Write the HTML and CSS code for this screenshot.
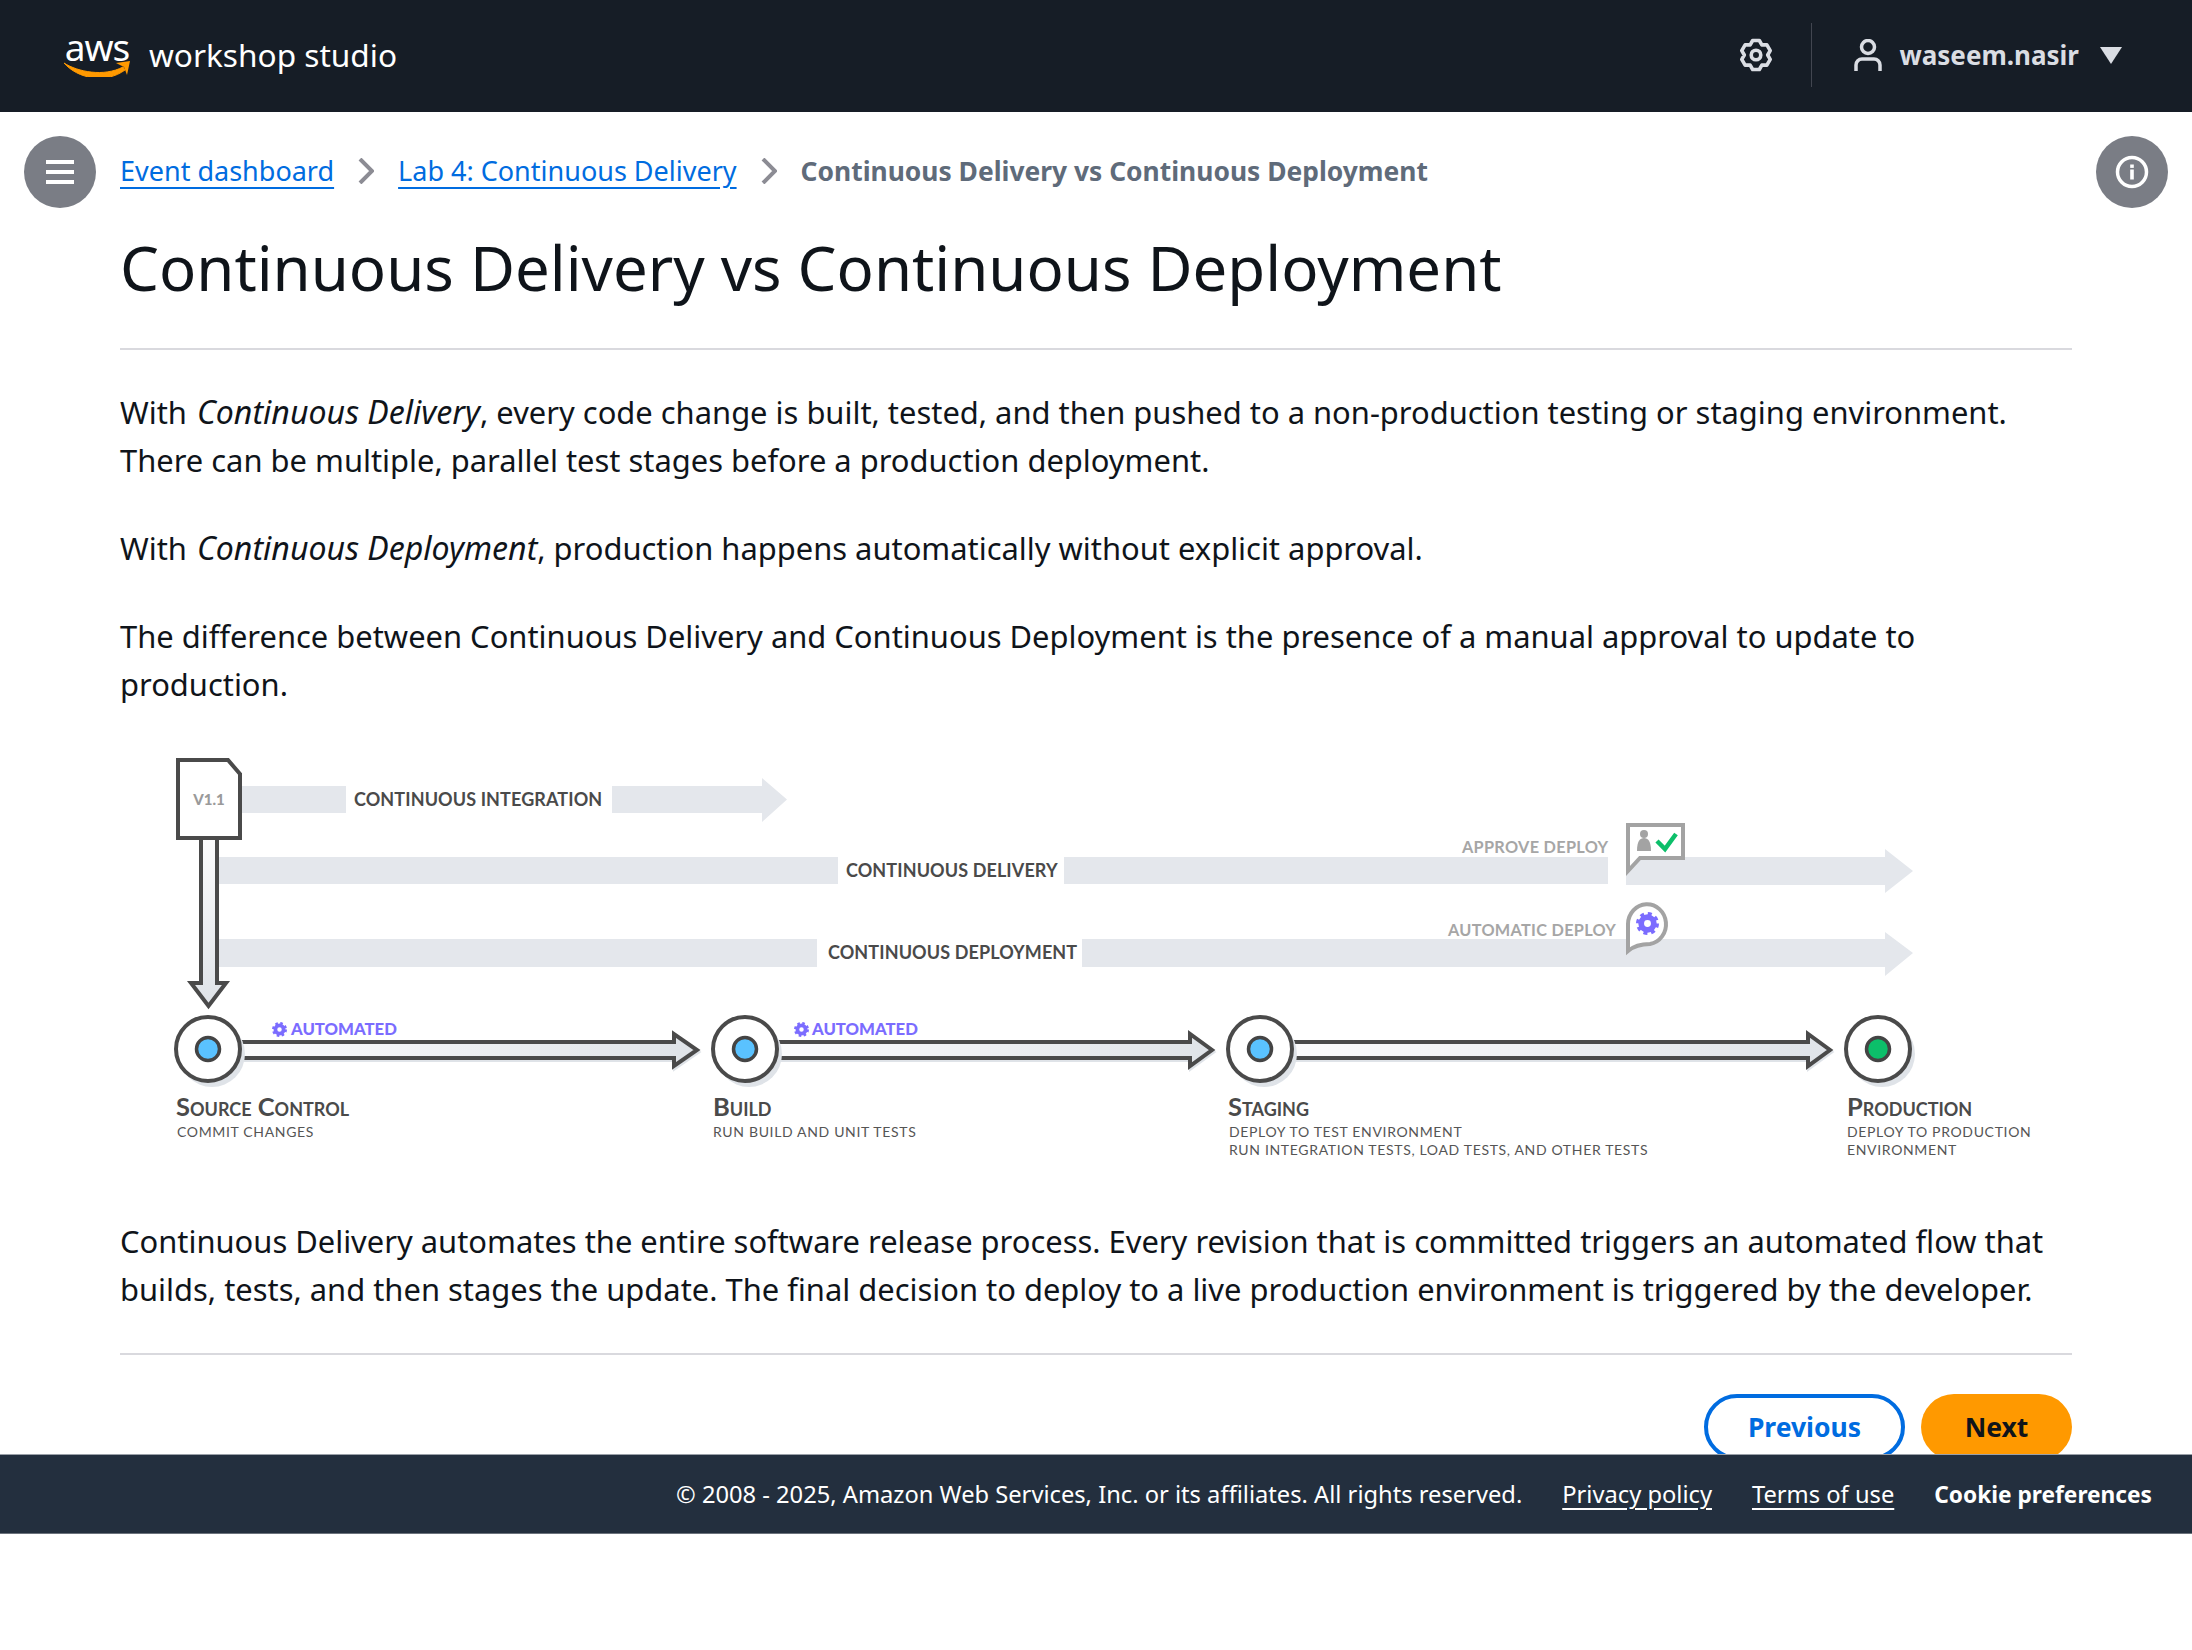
FILE: index.html
```html
<!DOCTYPE html>
<html lang="en">
<head>
  <meta charset="UTF-8" />
  <title>Continuous Delivery vs Continuous Deployment</title>
  <link rel="stylesheet" href="styles.css">
</head>
<body>
  <header class="topbar">
    <a class="brand">
      <span class="logo">
        <span class="logo-text">aws</span>
        <svg class="logo-smile" viewBox="0 0 66 16" width="66" height="16">
          <path d="M0 2 C14 11 40 16 59 6 L61 9 C42 23 14 18 0 2 Z" fill="#ff9900" stroke="#ff9900" stroke-width="1"/>
          <path d="M52 2 L66 0 L63 14 L60 6 Z" fill="#ff9900"/>
        </svg>
      </span>
      <span class="brand-name">workshop studio</span>
    </a>
    <svg class="gear" viewBox="0 0 32 32" width="34" height="34">
      <polygon points="12.85,2.36 19.15,2.36 21.5,6.47 26.24,6.45 29.39,11.91 27,16 29.39,20.09 26.24,25.55 21.5,25.53 19.15,29.64 12.85,29.64 10.5,25.53 5.76,25.55 2.61,20.09 5,16 2.61,11.91 5.76,6.45 10.5,6.47" fill="none" stroke="#dadde3" stroke-width="3.4" stroke-linejoin="round"/>
      <circle cx="16" cy="16" r="4.5" fill="none" stroke="#dadde3" stroke-width="3.4"/>
    </svg>
    <div class="divider"></div>
    <div class="user">
      <svg viewBox="0 0 28 32" width="28" height="32">
        <circle cx="14" cy="8" r="6.5" fill="none" stroke="#dadde3" stroke-width="3.5"/>
        <path d="M2 32 V26 A6 6 0 0 1 8 20 H20 A6 6 0 0 1 26 26 V32" fill="none" stroke="#dadde3" stroke-width="3.5"/>
      </svg>
      <span class="user-name">waseem.nasir</span>
      <span class="caret"></span>
    </div>
  </header>

  <main class="page-main">
    <div class="crumb-row">
      <button class="round-btn" aria-label="Menu">
        <span class="bars"><i></i><i></i><i></i></span>
      </button>
      <nav class="crumbs">
        <a href="#">Event dashboard</a>
        <svg class="chev" viewBox="0 0 16 26" width="16" height="26"><path d="M2 1 L14 13 L2 25" fill="none" stroke="#8c8c94" stroke-width="4"/></svg>
        <a href="#">Lab 4: Continuous Delivery</a>
        <svg class="chev" viewBox="0 0 16 26" width="16" height="26"><path d="M2 1 L14 13 L2 25" fill="none" stroke="#8c8c94" stroke-width="4"/></svg>
        <span class="crumb-current">Continuous Delivery vs Continuous Deployment</span>
      </nav>
      <button class="round-btn" aria-label="Info">
        <svg viewBox="0 0 36 36" width="36" height="36">
          <circle cx="18" cy="18" r="14.5" fill="none" stroke="#fff" stroke-width="3.5"/>
          <rect x="16.2" y="15.5" width="3.6" height="10" fill="#fff"/>
          <rect x="16.2" y="10.5" width="3.6" height="3.4" fill="#fff"/>
        </svg>
      </button>
    </div>

    <article class="content">
      <h1>Continuous Delivery vs Continuous Deployment</h1>

      <p>With <em>Continuous Delivery</em>, every code change is built, tested, and then pushed to a non-production testing or staging environment. There can be multiple, parallel test stages before a production deployment.</p>
      <p>With <em>Continuous Deployment</em>, production happens automatically without explicit approval.</p>
      <p>The difference between Continuous Delivery and Continuous Deployment is the presence of a manual approval to update to production.</p>

      <svg class="diagram" viewBox="120 748 1952 429" width="1952" height="429">
        <defs>
          <linearGradient id="fade-h" x1="0" x2="1" y1="0" y2="0">
            <stop offset="0" stop-color="#fbfbfc"/>
            <stop offset="1" stop-color="#dfe3e8"/>
          </linearGradient>
          <linearGradient id="fade-v" x1="0" x2="0" y1="0" y2="1">
            <stop offset="0" stop-color="#fbfbfc"/>
            <stop offset="1" stop-color="#dfe3e8"/>
          </linearGradient>
          <symbol id="cog" viewBox="0 0 20 20" overflow="visible">
            <circle cx="10" cy="10" r="8.5" fill="none" stroke="currentColor" stroke-width="3" stroke-dasharray="3.4 3.28"/>
            <circle cx="10" cy="10" r="5.5" fill="none" stroke="currentColor" stroke-width="5"/>
          </symbol>
        </defs>

        <!-- pipeline bands -->
        <g class="band">
          <rect x="240" y="786" width="106" height="27"/>
          <polygon points="612,786 762,786 762,778 787,799.5 762,822 762,813 612,813"/>
          <rect x="217" y="857" width="621" height="27"/>
          <rect x="1064" y="857" width="544" height="27"/>
          <polygon points="1626,857 1885,857 1885,849 1913,871 1885,893 1885,885 1626,885"/>
          <rect x="217" y="939" width="600" height="28"/>
          <polygon points="1082,939 1885,939 1885,932 1913,953 1885,976 1885,967 1082,967"/>
        </g>
        <text class="band-label" x="354" y="806">CONTINUOUS INTEGRATION</text>
        <text class="band-label" x="846" y="877">CONTINUOUS DELIVERY</text>
        <text class="band-label" x="828" y="959">CONTINUOUS DEPLOYMENT</text>

        <!-- version file and arrow down -->
        <polygon class="pipe-v" points="201,838 217,838 217,983 226,983 208.500,1006 191,983 201,983"/>
        <path class="file" d="M178 760 H228 L240 774 V838 H178 Z"/>
        <text class="file-label" x="209" y="805">V1.1</text>

        <!-- stage arrows -->
        <polygon class="pipe-h" points="241,1042 674,1042 674,1034 697,1050 674,1066 674,1058 241,1058"/>
        <polygon class="pipe-h" points="777,1042 1190,1042 1190,1034 1212,1050 1190,1066 1190,1058 777,1058"/>
        <polygon class="pipe-h" points="1293,1042 1808,1042 1808,1034 1830,1050 1808,1066 1808,1058 1293,1058"/>

        <!-- stage nodes -->
        <g class="node"><circle class="node-shadow" cx="212" cy="1054" r="33"/><circle class="node-ring" cx="208" cy="1049" r="32"/><circle class="dot-blue" cx="208" cy="1049" r="11.500"/></g>
        <g class="node"><circle class="node-shadow" cx="749" cy="1054" r="33"/><circle class="node-ring" cx="745" cy="1049" r="32"/><circle class="dot-blue" cx="745" cy="1049" r="11.500"/></g>
        <g class="node"><circle class="node-shadow" cx="1264" cy="1054" r="33"/><circle class="node-ring" cx="1260" cy="1049" r="32"/><circle class="dot-blue" cx="1260" cy="1049" r="11.500"/></g>
        <g class="node"><circle class="node-shadow" cx="1882" cy="1054" r="33"/><circle class="node-ring" cx="1878" cy="1049" r="32"/><circle class="dot-green" cx="1878" cy="1049" r="11.500"/></g>

        <!-- automated tags -->
        <use class="purple" href="#cog" x="272" y="1022" width="15" height="15"/>
        <text class="auto-label" x="291" y="1035">AUTOMATED</text>
        <use class="purple" href="#cog" x="794" y="1022" width="15" height="15"/>
        <text class="auto-label" x="812" y="1035">AUTOMATED</text>

        <!-- stage titles -->
        <text class="stage-title" x="176" y="1116">Source Control</text>
        <text class="stage-sub" x="177" y="1137">COMMIT CHANGES</text>
        <text class="stage-title" x="713" y="1116">Build</text>
        <text class="stage-sub" x="713" y="1137">RUN BUILD AND UNIT TESTS</text>
        <text class="stage-title" x="1228" y="1116">Staging</text>
        <text class="stage-sub" x="1229" y="1137">DEPLOY TO TEST ENVIRONMENT</text>
        <text class="stage-sub" x="1229" y="1155">RUN INTEGRATION TESTS, LOAD TESTS, AND OTHER TESTS</text>
        <text class="stage-title" x="1847" y="1116">Production</text>
        <text class="stage-sub" x="1847" y="1137">DEPLOY TO PRODUCTION</text>
        <text class="stage-sub" x="1847" y="1155">ENVIRONMENT</text>

        <!-- approve bubble -->
        <text class="deploy-label" x="1462" y="853">APPROVE DEPLOY</text>
        <path class="bubble" d="M1628 825 H1683 V858 H1640 L1628 871 Z"/>
        <circle class="person" cx="1644" cy="834" r="4"/>
        <path class="person" d="M1637 851 C1637 841 1640 838 1644 838 C1648 838 1651 841 1651 851 Z"/>
        <path class="check" d="M1657 841 L1665 849 L1676 834" />

        <!-- automatic bubble -->
        <text class="deploy-label" x="1448" y="936">AUTOMATIC DEPLOY</text>
        <path class="bubble" d="M1628 951 V924 A19 20 0 1 1 1650 944 C1642 944 1635 945 1628 951 Z"/>
        <use class="purple" href="#cog" x="1636" y="912" width="23" height="23"/>
      </svg>

      <p>Continuous Delivery automates the entire software release process. Every revision that is committed triggers an automated flow that builds, tests, and then stages the update. The final decision to deploy to a live production environment is triggered by the developer.</p>

      <div class="pager">
        <button class="btn btn-outline">Previous</button>
        <button class="btn btn-primary">Next</button>
      </div>
    </article>
  </main>

  <footer class="footer">
    <span>© 2008 - 2025, Amazon Web Services, Inc. or its affiliates. All rights reserved.</span>
    <a href="#">Privacy policy</a>
    <a href="#">Terms of use</a>
    <strong>Cookie preferences</strong>
  </footer>
</body>
</html>
```

FILE: styles.css
```css
/* Reset and basics */
* {
  box-sizing: border-box;
}
body {
  margin: 0;
  background: #fff;
  color: #0f141a;
  font-family: "Noto Sans", "Open Sans", sans-serif;
}

/* Top bar */
.topbar {
  display: flex;
  align-items: center;
  height: 112px;
  padding: 0 70px 2px 64px;
  background: #161d26;
  color: #dadde3;
}
.brand {
  display: flex;
  align-items: center;
  gap: 19px;
  margin-right: auto;
}
.logo {
  display: flex;
  flex-direction: column;
  align-items: center;
  width: 66px;
}
.logo-text {
  color: #fff;
  font-size: 37px;
  line-height: 25px;
  height: 27px;
  letter-spacing: -1px;
}
.logo-smile {
  display: block;
}
.brand-name {
  color: #fff;
  font-size: 31.6px;
  line-height: 40px;
}
.gear {
  margin-right: 38px;
}
.divider {
  width: 1px;
  height: 64px;
  background: #424650;
  margin-right: 42px;
}
.user {
  display: flex;
  align-items: center;
  gap: 17px;
}
.user-name {
  font-size: 26px;
  font-weight: 700;
}
.caret {
  width: 0;
  height: 0;
  margin-left: 4px;
  border-left: 11px solid transparent;
  border-right: 11px solid transparent;
  border-top: 17px solid #dadde3;
}

.page-main {
  height: 1342px;
  overflow: hidden;
}
.crumb-row {
  display: flex;
  align-items: center;
  padding: 24px 24px 0;
}
.round-btn {
  display: flex;
  align-items: center;
  justify-content: center;
  flex: none;
  width: 72px;
  height: 72px;
  padding: 0;
  border: none;
  border-radius: 50%;
  background: #7a7d85;
}
.bars {
  display: flex;
  flex-direction: column;
  gap: 6px;
}
.bars i {
  display: block;
  width: 28px;
  height: 4px;
  background: #fff;
}
.crumbs {
  flex: 1;
  display: flex;
  align-items: center;
  gap: 24px;
  margin-left: 24px;
  padding-bottom: 2px;
  font-size: 27px;
}
.crumbs a {
  margin-bottom: 2px;
  color: #006ce0;
  text-underline-offset: 6px;
}
.crumb-current {
  color: #5f6b7a;
  font-size: 26.4px;
  font-weight: 700;
}

.content {
  padding: 0 120px;
}
h1 {
  margin: 19px 0 38px;
  padding-bottom: 41px;
  border-bottom: 2px solid #d9d9de;
  font-size: 61.700px;
  font-weight: 400;
  line-height: 80px;
}
p {
  margin: 0 0 40px;
  font-size: 30.900px;
  line-height: 48px;
}
em {
  margin-left: 2px;
  font-size: 32.100px;
  line-height: 1;
}
.diagram {
  display: block;
  margin-bottom: 40px;
}

/* Diagram parts */
.band {
  fill: #e4e7ec;
}
.band-label {
  font: 700 18px "Lato", sans-serif;
  fill: #4a4a4a;
  letter-spacing: 0.1px;
}
.file {
  fill: #fff;
  stroke: #4a4a4a;
  stroke-width: 4;
}
.file-label {
  font: 900 15px "Lato", sans-serif;
  fill: #9a9a9a;
  text-anchor: middle;
}
.pipe-h {
  fill: url(#fade-h);
  stroke: #4a4a4a;
  stroke-width: 4;
  filter: drop-shadow(1px 2px 0 #dfe3e8);
}
.pipe-v {
  fill: url(#fade-v);
  stroke: #4a4a4a;
  stroke-width: 4;
}
.node-shadow {
  fill: #dfe3e8;
}
.node-ring {
  fill: #fff;
  stroke: #4a4a4a;
  stroke-width: 4;
}
.dot-blue {
  fill: #5ac2ff;
  stroke: #444;
  stroke-width: 3.5;
}
.dot-green {
  fill: #0cbf6a;
  stroke: #444;
  stroke-width: 3.5;
}
.purple {
  color: #7b6cff;
}
.auto-label {
  font: 900 16.700px "Lato", sans-serif;
  fill: #7b6cff;
}
.stage-title {
  font: 700 25.500px "Lato", sans-serif;
  font-variant: small-caps;
  fill: #4a4a4a;
}
.stage-sub {
  font: 400 14px "Lato", sans-serif;
  fill: #555;
  letter-spacing: 0.66px;
}
.deploy-label {
  font: 700 16.300px "Lato", sans-serif;
  fill: #a6a6a6;
  letter-spacing: 0.3px;
}
.bubble {
  fill: #fff;
  stroke: #a3a3a3;
  stroke-width: 4;
}
.person {
  fill: #a3a3a3;
}
.check {
  fill: none;
  stroke: #0cbf6a;
  stroke-width: 4.5;
}

/* Previous / Next */
.pager {
  display: flex;
  justify-content: flex-end;
  gap: 16px;
  border-top: 2px solid #d9d9de;
  padding-top: 39px;
}
.btn {
  height: 66px;
  border-radius: 33px;
  font-family: inherit;
  font-size: 26.500px;
  font-weight: 700;
}
.btn-outline {
  width: 201px;
  background: #fff;
  border: 4px solid #006ce0;
  color: #006ce0;
}
.btn-primary {
  width: 151px;
  background: #ff9900;
  border: none;
  color: #0f141a;
}

/* Footer */
.footer {
  display: flex;
  align-items: center;
  justify-content: flex-end;
  gap: 40px;
  height: 80px;
  padding: 0 40px;
  background: #232f3e;
  border-top: 1px solid #9aa0a8;
  border-bottom: 1px solid #6b727c;
  color: #fff;
  font-size: 23.700px;
}
.footer a {
  color: #fff;
  text-underline-offset: 5px;
}
.footer strong {
  font-size: 22.700px;
}
```
